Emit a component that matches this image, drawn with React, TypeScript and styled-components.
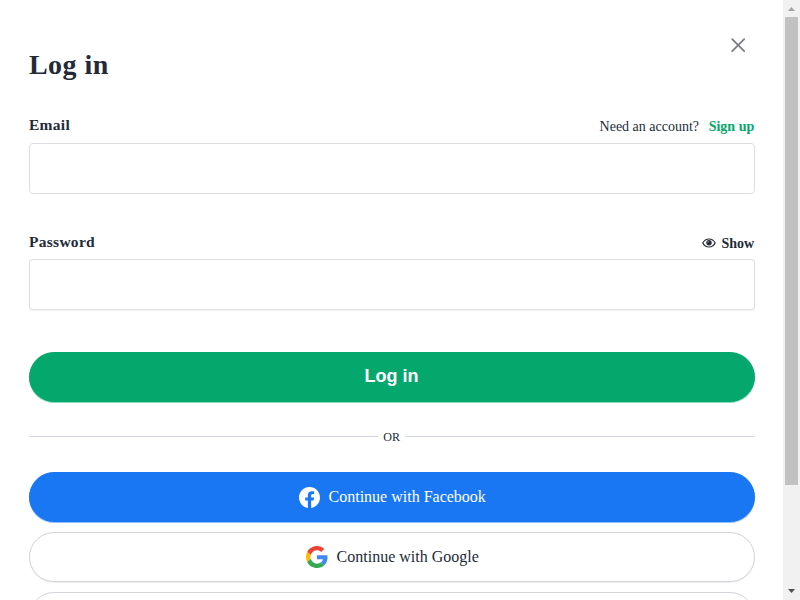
import React from "react";
import styled, { createGlobalStyle } from "styled-components";

const GlobalStyle = createGlobalStyle`
  *, *::before, *::after { box-sizing: border-box; }
  body { margin: 0; background: #fff; overflow: hidden; }
`;

const Viewport = styled.div`
  display: flex;
  width: 800px;
  height: 600px;
  overflow: hidden;
  background: #fff;
  color: #242b38;
  font-family: "Liberation Serif", "Times New Roman", serif;
`;

const Dialog = styled.main`
  flex: 1;
  padding: 34px 28.4px 0 28.6px;
  overflow: hidden;
`;

const Header = styled.header`
  display: flex;
  justify-content: space-between;
  align-items: flex-start;
  height: 80px;
`;

const Title = styled.h1`
  margin: 15px 0 0 0.4px;
  font-size: 28px;
  line-height: 32px;
  letter-spacing: 0.45px;
  color: #242b38;
`;

const CloseButton = styled.button`
  display: flex;
  margin: 3px 8.4px 0 0;
  padding: 0;
  border: 0;
  background: none;
`;

const Field = styled.div<{ $height: number }>`
  height: ${(p) => p.$height}px;
`;

const FieldHead = styled.div<{ $height: number }>`
  display: flex;
  justify-content: space-between;
  height: ${(p) => p.$height}px;
`;

const Label = styled.label`
  margin: 2px 0 0 0.4px;
  font-size: 15.5px;
  line-height: 18px;
  font-weight: 700;
  letter-spacing: 0.28px;
`;

const Aside = styled.div`
  display: flex;
  align-items: center;
  height: 18px;
  margin: 3px 0.4px 0 0;
  padding-top: 1px;
  font-size: 14px;
  line-height: 18px;
`;

const SignUp = styled.a`
  margin-left: 9.6px;
  font-weight: 700;
  color: #05a86c;
`;

const Toggle = styled.span`
  margin-left: 5.5px;
  font-weight: 700;
`;

const Input = styled.input`
  display: block;
  width: 100%;
  height: 51px;
  padding: 0 14px;
  border: 1px solid #dcdee4;
  border-radius: 4px;
  background: #fff;
  outline: none;
`;

const PasswordInput = styled(Input)`
  border-bottom-color: #e6e7eb;
  box-shadow: 0 1px 0 #eeeff2;
`;

const PillButton = styled.button<{ $bg: string; $fg: string; $border?: string; $edge: string }>`
  display: flex;
  align-items: center;
  justify-content: center;
  gap: 8.6px;
  width: 100%;
  height: 50px;
  padding: 0 0 0 1.6px;
  border: 1px solid ${(p) => p.$border ?? p.$bg};
  border-radius: 26px;
  background: ${(p) => p.$bg};
  box-shadow: 0 1px 0 ${(p) => p.$edge};
  color: ${(p) => p.$fg};
  font: 16px/20px "Liberation Serif", "Times New Roman", serif;
`;

const SubmitButton = styled(PillButton)`
  padding-bottom: 2px;
  padding-left: 0;
  font: 700 18px/20px "Liberation Sans", Arial, sans-serif;
`;

const Divider = styled.div`
  display: flex;
  align-items: center;
  gap: 5px;
  height: 21px;
  margin: 24px 0 25px;
  font-size: 12px;
  line-height: 19px;

  &::before,
  &::after {
    content: "";
    flex: 1;
    height: 1px;
    background: #d3d6dc;
  }
`;

const DividerText = styled.span`
  padding-top: 2px;
`;

const Providers = styled.div`
  display: flex;
  flex-direction: column;
  gap: 10px;
`;

const Scrollbar = styled.div`
  display: flex;
  flex-direction: column;
  align-items: center;
  width: 17px;
  height: 600px;
  background: #f1f1f1;
`;

const Arrow = styled.div`
  display: flex;
  height: 17px;
  flex: none;
`;

const Thumb = styled.div`
  width: 13px;
  height: 468px;
  background: #c1c1c1;
`;

const Track = styled.div`
  flex: 1;
`;

const EyeSvg = styled.svg`
  margin-bottom: 2px;
`;

const CloseIcon = () => (
  <svg width="16" height="16" viewBox="0 0 16 16" fill="none" stroke="#7d7c86" strokeWidth="1.8" strokeLinecap="round">
    <path d="M2.200 2.200 14.200 14.200M14.200 2.200 2.200 14.200" />
  </svg>
);

const EyeIcon = () => (
  <EyeSvg width="14" height="10" viewBox="0 0 14 10">
    <path d="M.8 5C2.2 2.3 4.4 1 7 1s4.800 1.300 6.200 4C11.800 7.700 9.600 9 7 9S2.200 7.700.8 5Z" fill="none" stroke="#252b38" strokeWidth="1.200" />
    <circle cx="7" cy="4.700" r="2.700" fill="#252b38" />
    <circle cx="6.200" cy="3.800" r=".8" fill="#8b8f97" />
  </EyeSvg>
);

const FacebookIcon = () => (
  <svg width="21" height="21" viewBox="0 0 24 24" fill="#fff">
    <path d="M24 12.073C24 5.405 18.627 0 12 0S0 5.405 0 12.073C0 18.100 4.388 23.094 10.125 24v-8.437H7.078v-3.490h3.047v-2.660c0-3.025 1.792-4.697 4.533-4.697 1.312 0 2.686.236 2.686.236v2.970h-1.513c-1.491 0-1.956.931-1.956 1.886v2.265h3.328l-.532 3.490h-2.796V24C19.612 23.094 24 18.100 24 12.073Z" />
  </svg>
);

const GoogleIcon = () => (
  <svg width="22" height="22" viewBox="0 0 48 48">
    <path fill="#EA4335" d="M24 9.500c3.540 0 6.710 1.220 9.210 3.600l6.850-6.850C35.900 2.380 30.470 0 24 0 14.620 0 6.510 5.380 2.560 13.220l7.980 6.190C12.430 13.720 17.740 9.500 24 9.500z" />
    <path fill="#4285F4" d="M46.980 24.550c0-1.570-.15-3.090-.38-4.550H24v9.020h12.940c-.58 2.960-2.260 5.480-4.780 7.180l7.730 6c4.510-4.180 7.090-10.360 7.090-17.650z" />
    <path fill="#FBBC05" d="M10.530 28.590c-.48-1.450-.76-2.990-.76-4.590s.27-3.140.76-4.590l-7.980-6.190C.92 16.460 0 20.120 0 24c0 3.880.92 7.540 2.560 10.780l7.970-6.190z" />
    <path fill="#34A853" d="M24 48c6.480 0 11.930-2.130 15.890-5.810l-7.730-6c-2.150 1.450-4.920 2.300-8.160 2.300-6.260 0-11.570-4.220-13.470-9.910l-7.980 6.190C6.510 42.620 14.620 48 24 48z" />
  </svg>
);

export default function App() {
  return (
    <>
      <GlobalStyle />
      <Viewport>
        <Dialog>
          <Header>
            <Title>Log in</Title>
            <CloseButton aria-label="Close">
              <CloseIcon />
            </CloseButton>
          </Header>
          <Field $height={117}>
            <FieldHead $height={29}>
              <Label htmlFor="email">Email</Label>
              <Aside>
                Need an account?<SignUp>Sign up</SignUp>
              </Aside>
            </FieldHead>
            <Input id="email" type="email" />
          </Field>
          <Field $height={121}>
            <FieldHead $height={28}>
              <Label htmlFor="password">Password</Label>
              <Aside>
                <EyeIcon />
                <Toggle>Show</Toggle>
              </Aside>
            </FieldHead>
            <PasswordInput id="password" type="password" />
          </Field>
          <SubmitButton $bg="#05a86c" $fg="#fff" $edge="#91d9bd">Log in</SubmitButton>
          <Divider>
            <DividerText>OR</DividerText>
          </Divider>
          <Providers>
            <PillButton $bg="#1977f3" $fg="#fff" $edge="#93bff9">
              <FacebookIcon />
              Continue with Facebook
            </PillButton>
            <PillButton $bg="#fff" $fg="#242b38" $border="#d2d4da" $edge="#eeeff2">
              <GoogleIcon />
              Continue with Google
            </PillButton>
            <PillButton $bg="#fff" $fg="#242b38" $border="#d2d4da" $edge="#eeeff2" aria-label="More sign-in options" />
          </Providers>
        </Dialog>
        <Scrollbar>
          <Arrow>
            <svg width="17" height="17" viewBox="0 0 17 17"><path d="M5 11 8.500 7 12 11Z" fill="#a3a3a3" /></svg>
          </Arrow>
          <Thumb />
          <Track />
          <Arrow>
            <svg width="17" height="17" viewBox="0 0 17 17"><path d="M5 6 8.500 10 12 6Z" fill="#505050" /></svg>
          </Arrow>
        </Scrollbar>
      </Viewport>
    </>
  );
}
